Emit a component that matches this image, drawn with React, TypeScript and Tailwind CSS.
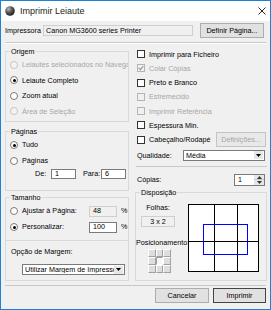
import React from "react";

type Kids = { children?: React.ReactNode };

const Radio = ({ checked, disabled }: { checked?: boolean; disabled?: boolean }) => (
  <span
    className={`flex h-[8px] w-[8px] shrink-0 items-center justify-center rounded-full border ${
      disabled ? "border-[#c4c4c4] bg-[#f4f4f4]" : "border-[#7a7a7a] bg-white"
    }`}
  >
    {checked && <span className="h-[3px] w-[3px] rounded-full bg-black" />}
  </span>
);

const RadioRow = ({
  label,
  checked,
  disabled,
}: {
  label: string;
  checked?: boolean;
  disabled?: boolean;
}) => (
  <div className="flex h-[15.5px] items-center whitespace-nowrap pl-[4px]">
    <Radio checked={checked} disabled={disabled} />
    <span className={`ml-[4px] ${disabled ? "text-[#a6a6a6]" : "text-black"}`}>{label}</span>
  </div>
);

const Check = ({ checked, disabled }: { checked?: boolean; disabled?: boolean }) => (
  <span
    className={`flex h-[8px] w-[8px] shrink-0 items-center justify-center border ${
      disabled ? "border-[#b4b4b4] bg-[#f0f0f0]" : "border-[#333] bg-white"
    }`}
  >
    {checked && (
      <svg width="6" height="6" viewBox="0 0 6 6">
        <path d="M0.8 3 L2.4 4.6 L5.3 1.2" fill="none" stroke="#9a9a9a" strokeWidth="1.2" />
      </svg>
    )}
  </span>
);

const CheckRow = ({
  label,
  checked,
  disabled,
  children,
}: {
  label: string;
  checked?: boolean;
  disabled?: boolean;
} & Kids) => (
  <div className="flex h-[14.25px] items-center whitespace-nowrap pl-[2px]">
    <Check checked={checked} disabled={disabled} />
    <span className={`ml-[4px] ${disabled ? "text-[#a6a6a6]" : "text-black"}`}>{label}</span>
    {children}
  </div>
);

const GroupBox = ({ label, className, children }: { label: string; className?: string } & Kids) => (
  <div className={`relative border border-[#d9d9d9] ${className}`}>
    <span className="absolute -top-[5px] left-[4px] bg-[#f0f0f0] px-[1px] leading-[9px] text-black">
      {label}
    </span>
    {children}
  </div>
);

const Field = ({ value, className }: { value: string; className?: string }) => (
  <div className={`flex h-[11px] items-center border pl-[3px] ${className}`}>{value}</div>
);

const Select = ({ value, className }: { value: string; className?: string }) => (
  <div className={`flex h-[11px] items-center border border-[#7a7a7a] bg-white ${className}`}>
    <span className="flex-1 overflow-hidden whitespace-nowrap pl-[2px]">{value}</span>
    <span className="mr-px flex h-[8px] w-[9px] items-center justify-center bg-[#e6e6e6]">
      <svg width="5" height="3" viewBox="0 0 5 3">
        <path d="M0 0 H5 L2.5 3 Z" fill="#000" />
      </svg>
    </span>
  </div>
);

const Button = ({ label, className }: { label: string; className?: string }) => (
  <div className={`flex h-[15px] items-center justify-center border ${className}`}>{label}</div>
);

const PosCell = ({ pressed }: { pressed?: boolean }) => (
  <div
    className={`border ${
      pressed
        ? "border-t-[#a0a0a0] border-l-[#a0a0a0] border-r-white border-b-white bg-[#f7f7f7]"
        : "border-t-white border-l-white border-r-[#a0a0a0] border-b-[#a0a0a0] bg-[#dedede]"
    }`}
  />
);

export default function App() {
  return (
    <div className="flex h-[310px] w-[271px] flex-col overflow-hidden border border-[#1883d7] bg-[#f0f0f0] font-['Liberation_Sans',Arial,sans-serif] text-[7.2px] leading-none text-black">
      {/* title bar */}
      <div className="flex h-[20px] shrink-0 items-center bg-white">
        <svg className="ml-[4px]" width="10" height="10" viewBox="0 0 10 10">
          <defs>
            <radialGradient id="ball" cx="0.35" cy="0.3" r="0.75">
              <stop offset="0" stopColor="#b9b9b9" />
              <stop offset="0.5" stopColor="#555" />
              <stop offset="1" stopColor="#1c1c1c" />
            </radialGradient>
          </defs>
          <circle cx="5" cy="5" r="4.8" fill="url(#ball)" />
        </svg>
        <span className="ml-[5px] text-[9px] text-[#1a1a1a]">Imprimir Leiaute</span>
        <svg className="ml-auto mr-[4px]" width="8" height="8" viewBox="0 0 8 8">
          <path d="M0.5 0.5 L7.5 7.5 M7.5 0.5 L0.5 7.5" stroke="#111" strokeWidth="0.9" />
        </svg>
      </div>

      {/* printer */}
      <div className="mt-[2px] flex h-[15px] items-center px-[4px]">
        <span className="w-[38px]">Impressora</span>
        <Field
          value="Canon MG3600 series Printer"
          className="w-[150px] border-[#cfcfcf] bg-[#f0f0f0] !pl-[2px]"
        />
        <Button label="Definir Página..." className="ml-[7px] w-[64px] border-[#adadad] bg-[#e1e1e1]" />
      </div>

      <div className="mx-[4px] mt-[4px] h-px bg-[#c9c9c9]" />
      <div className="mx-[4px] h-px bg-white" />

      <div className="flex gap-[6px] pl-[4px]">
        {/* left column */}
        <div className="flex w-[124px] flex-col pt-[7px]">
          <GroupBox label="Origem" className="h-[71px] pt-[5px]">
            <div className="overflow-hidden pr-[1px]">
              <RadioRow label="Leiautes selecionados no Navegador" disabled />
              <RadioRow label="Leiaute Completo" checked />
              <RadioRow label="Zoom atual" />
              <RadioRow label="Área de Seleção" disabled />
            </div>
          </GroupBox>

          <GroupBox label="Páginas" className="mt-[9px] h-[60px] pt-[5px]">
            <div className="flex h-[16px] items-center pl-[4px]">
              <Radio checked />
              <span className="ml-[4px]">Tudo</span>
            </div>
            <div className="flex h-[16px] items-center pl-[4px]">
              <Radio />
              <span className="ml-[4px]">Páginas</span>
            </div>
            <div className="flex h-[10px] items-center pl-[29px]">
              <span className="w-[16px]">De:</span>
              <Field value="1" className="!h-[10px] w-[25px] border-[#7a7a7a] bg-white" />
              <span className="ml-[7px] w-[18px]">Para:</span>
              <Field value="6" className="!h-[10px] w-[25px] border-[#7a7a7a] bg-white" />
            </div>
          </GroupBox>

          <GroupBox label="Tamanho" className="mt-[6px] h-[84px] pt-[5px]">
            <div className="flex h-[16px] items-center">
              <div className="flex w-[83px] items-center whitespace-nowrap pl-[4px]">
                <Radio />
                <span className="ml-[4px]">Ajustar à Página:</span>
              </div>
              <Field value="48" className="w-[28px] border-[#cfcfcf] bg-[#f0f0f0]" />
              <span className="ml-[4px]">%</span>
            </div>
            <div className="flex h-[16px] items-center">
              <div className="flex w-[83px] items-center whitespace-nowrap pl-[4px]">
                <Radio checked />
                <span className="ml-[4px]">Personalizar:</span>
              </div>
              <Field value="100" className="w-[28px] border-[#7a7a7a] bg-white" />
              <span className="ml-[4px]">%</span>
            </div>
            <div className="mt-[5px] h-px bg-[#d9d9d9]" />
            <div className="mt-[7px] h-[8px] pl-[5px] leading-[8px]">Opção de Margem:</div>
            <Select value="Utilizar Margem de Impressora" className="ml-[16px] mt-[8px] w-[103px]" />
          </GroupBox>
        </div>

        {/* right column */}
        <div className="flex w-[132px] flex-col pt-[3px]">
          <CheckRow label="Imprimir para Ficheiro" />
          <CheckRow label="Colar Cópias" checked disabled />
          <CheckRow label="Preto e Branco" />
          <CheckRow label="Estremecido" disabled />
          <CheckRow label="Imprimir Referência" disabled />
          <CheckRow label="Espessura Min." />
          <CheckRow label="Cabeçalho/Rodapé">
            <Button
              label="Definições..."
              className="ml-auto mr-[1px] w-[50px] border-[#c4c4c4] bg-[#e8e8e8] text-[#a6a6a6]"
            />
          </CheckRow>

          <div className="mt-[3px] flex h-[11px] items-center pl-[2px]">
            <span>Qualidade:</span>
            <Select value="Média" className="ml-auto mr-[2px] w-[82px]" />
          </div>

          <div className="ml-[1px] mt-[5px] h-px bg-[#c9c9c9]" />

          <div className="mt-[7px] flex h-[12px] items-center pl-[2px]">
            <span>Cópias:</span>
            <div className="ml-auto mr-[2px] flex h-[12px] w-[31px] border border-[#7a7a7a] bg-white">
              <span className="flex flex-1 items-center pl-[3px]">1</span>
              <div className="flex w-[10px] flex-col bg-[#e6e6e6]">
                <div className="flex flex-1 items-center justify-center border-b border-[#c8c8c8]">
                  <svg width="5" height="3" viewBox="0 0 5 3">
                    <path d="M0 3 H5 L2.5 0 Z" fill="#333" />
                  </svg>
                </div>
                <div className="flex flex-1 items-center justify-center">
                  <svg width="5" height="3" viewBox="0 0 5 3">
                    <path d="M0 0 H5 L2.5 3 Z" fill="#333" />
                  </svg>
                </div>
              </div>
            </div>
          </div>

          <GroupBox label="Disposição" className="mt-[6px] flex-1">
            <div className="flex">
              <div className="flex w-[52px] flex-col">
                <div className="ml-[5px] mt-[11px] h-[8px] w-[34px] text-center leading-[8px]">Folhas:</div>
                <div className="ml-[5px] mt-[4px] flex h-[11px] w-[34px] items-center justify-center border border-[#cfcfcf]">
                  3 x 2
                </div>
                <div className="mt-[12px] h-[8px] whitespace-nowrap leading-[8px]">Posicionamento:</div>
                <div className="ml-[12px] mt-[2px] grid h-[24px] w-[23px] grid-cols-3 grid-rows-3">
                  <PosCell />
                  <PosCell />
                  <PosCell />
                  <PosCell />
                  <PosCell pressed />
                  <PosCell />
                  <PosCell />
                  <PosCell />
                  <PosCell />
                </div>
              </div>
              <div className="relative mt-[11px] grid h-[68px] w-[71px] grid-cols-[26px_23px_1fr] grid-rows-[37px_1fr] border border-black bg-white">
                <div className="border-b border-r border-black" />
                <div className="border-b border-r border-black" />
                <div className="border-b border-black" />
                <div className="border-r border-black" />
                <div className="border-r border-black" />
                <div />
                <div className="absolute left-[14px] top-[19px] h-[31px] w-[45px] border border-[#0000ff]" />
              </div>
            </div>
          </GroupBox>
        </div>
      </div>

      <div className="mx-[4px] mt-[4px] h-px bg-[#c9c9c9]" />
      <div className="mt-[2px] flex justify-end gap-[4px] pr-[4px]">
        <Button label="Cancelar" className="w-[54px] border-[#adadad] bg-[#e1e1e1]" />
        <Button label="Imprimir" className="w-[53px] border-[#444] bg-[#e1e1e1]" />
      </div>
    </div>
  );
}
